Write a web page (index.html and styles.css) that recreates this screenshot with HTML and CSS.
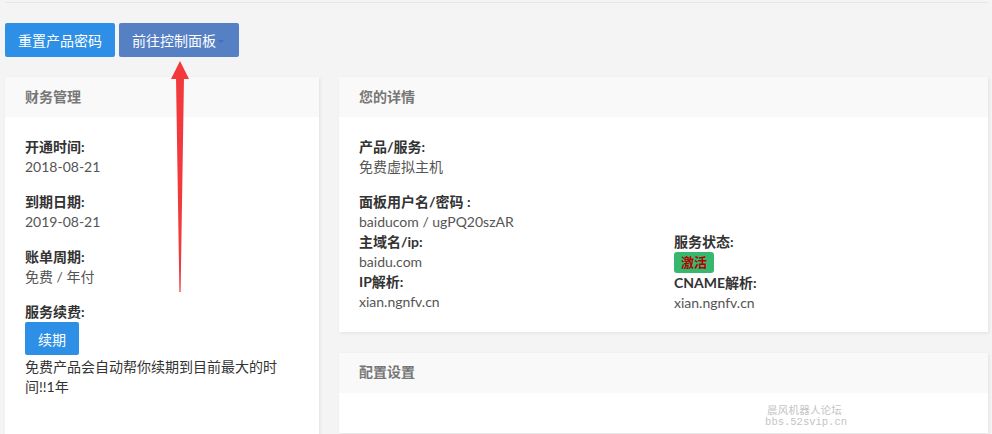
FILE: index.html
```html
<!doctype html>
<html lang="zh-CN">
    <head>
        <meta charset="UTF-8" />
        <meta name="viewport" content="width=device-width, initial-scale=1.0" />
        <title>产品详情</title>
        <link rel="stylesheet" href="styles.css">
    </head>
    <body>
        <div class="page">
            <div class="top-line"></div>

            <!-- Action buttons -->
            <div class="actions">
                <button class="btn btn-blue">重置产品密码</button>
                <button class="btn btn-indigo">前往控制面板<span class="caret"></span></button>
            </div>

            <div class="columns">
                <!-- Billing -->
                <div class="card card-left">
                    <div class="card-head">财务管理</div>
                    <div class="card-body">
                        <div class="field">
                            <div class="label">开通时间:</div>
                            <div class="value">2018-08-21</div>
                        </div>
                        <div class="field">
                            <div class="label">到期日期:</div>
                            <div class="value">2019-08-21</div>
                        </div>
                        <div class="field">
                            <div class="label">账单周期:</div>
                            <div class="value">免费 / 年付</div>
                        </div>
                        <div class="field">
                            <div class="label">服务续费:</div>
                            <button class="btn btn-blue btn-small">续期</button>
                            <div class="note">免费产品会自动帮你续期到目前最大的时间!!1年</div>
                        </div>
                    </div>
                </div>

                <div class="right">
                    <!-- Details -->
                    <div class="card">
                        <div class="card-head">您的详情</div>
                        <div class="card-body">
                            <div class="field">
                                <div class="label">产品/服务:</div>
                                <div class="value">免费虚拟主机</div>
                            </div>
                            <div class="field flat">
                                <div class="label">面板用户名/密码 :</div>
                                <div class="value">baiducom / ugPQ20szAR</div>
                            </div>
                            <div class="grid">
                                <div>
                                    <div class="label">主域名/ip:</div>
                                    <div class="value">baidu.com</div>
                                    <div class="label">IP解析:</div>
                                    <div class="value">xian.ngnfv.cn</div>
                                </div>
                                <div>
                                    <div class="label">服务状态:</div>
                                    <span class="badge">激活</span>
                                    <div class="label">CNAME解析:</div>
                                    <div class="value">xian.ngnfv.cn</div>
                                </div>
                            </div>
                        </div>
                    </div>

                    <!-- Settings -->
                    <div class="card card-settings">
                        <div class="card-head">配置设置</div>
                        <div class="card-body"></div>
                    </div>
                </div>
            </div>

            <!-- Annotation arrow -->
            <svg class="arrow" width="20" height="240" viewBox="170 60 20 240">
                <polygon points="180,61 171,79 189,79" fill="#f2393b" />
                <polygon points="176,77 184,77 180.6,292 179.4,292" fill="#f2393b" />
            </svg>

            <div class="watermark">
                <div class="wm-name">晨风机器人论坛</div>
                <div>bbs.52svip.cn</div>
            </div>
        </div>
    </body>
</html>
```

FILE: styles.css
```css
/* Basic styling */
html,
body {
    margin: 0;
    height: 100%;
    overflow: hidden;
}
body {
    font-family: Lato, "Noto Sans CJK SC", sans-serif;
    font-size: 14px;
    line-height: 20px;
    background-color: #f4f4f4;
    color: #555;
}
.page {
    position: relative;
    padding: 0 4px 0 5px;
}
.top-line {
    height: 2px;
    border-bottom: 1px solid #e6e6e6;
}
.actions {
    display: flex;
    gap: 4px;
    margin-top: 20px;
}
.btn {
    font-family: Lato, "Noto Sans CJK SC", sans-serif;
    font-size: 14px;
    height: 34px;
    padding: 0 13px;
    color: #fff;
    border: none;
    border-radius: 2px;
    cursor: pointer;
    display: inline-flex;
    align-items: center;
}
.btn-blue {
    background-color: #2e8fe6;
}
.btn-indigo {
    background-color: #5680c4;
    padding-right: 15px;
}
.caret {
    display: inline-block;
    margin-left: 2px;
    margin-top: 2px;
    border-left: 3px solid transparent;
    border-right: 3px solid transparent;
    border-top: 3px solid #3d6fc0;
}
.btn-small {
    height: 33px;
    padding: 0 13px;
}
.columns {
    display: flex;
    gap: 20px;
    margin-top: 20px;
    align-items: flex-start;
}
.card {
    background-color: #fff;
    box-shadow: 1px 1px 3px rgba(0, 0, 0, 0.08);
}
.card-left {
    width: 314px;
    flex: none;
    min-height: 400px;
}
.right {
    flex: 1;
    display: flex;
    flex-direction: column;
    gap: 21px;
}
.card-head {
    height: 40px;
    line-height: 40px;
    padding: 0 20px;
    background-color: #f9f9f9;
    color: #777;
    font-weight: bold;
}
.card-body {
    padding: 20px 20px 19px;
}
.card-settings .card-head {
    line-height: 38px;
}
.card-settings .card-body {
    height: 40px;
    padding: 0;
}
.field {
    margin-bottom: 15px;
}
.field.flat {
    margin-bottom: 0;
}
.label {
    color: #333;
    font-weight: bold;
}
.value {
    color: #555;
}
.note {
    color: #333;
    max-width: 260px;
    margin-top: 2px;
}
.grid {
    display: grid;
    grid-template-columns: 315px 1fr;
}
.badge {
    display: inline-block;
    height: 21px;
    line-height: 21px;
    padding: 0 7px;
    background-color: #36b96e;
    color: #b30000;
    font-size: 13px;
    font-weight: bold;
    border-radius: 3px;
}
.arrow {
    position: absolute;
    left: 170px;
    top: 60px;
}
.watermark {
    position: absolute;
    right: 145px;
    top: 404px;
    color: #c4c4c4;
    font-family: "Liberation Mono", "Noto Sans CJK SC", monospace;
    font-size: 10.5px;
    line-height: 12px;
    text-align: right;
}
.wm-name {
    font-family: "Noto Sans CJK SC", serif;
    font-size: 10.5px;
    letter-spacing: 0.2px;
    margin-right: 5px;
}
```
